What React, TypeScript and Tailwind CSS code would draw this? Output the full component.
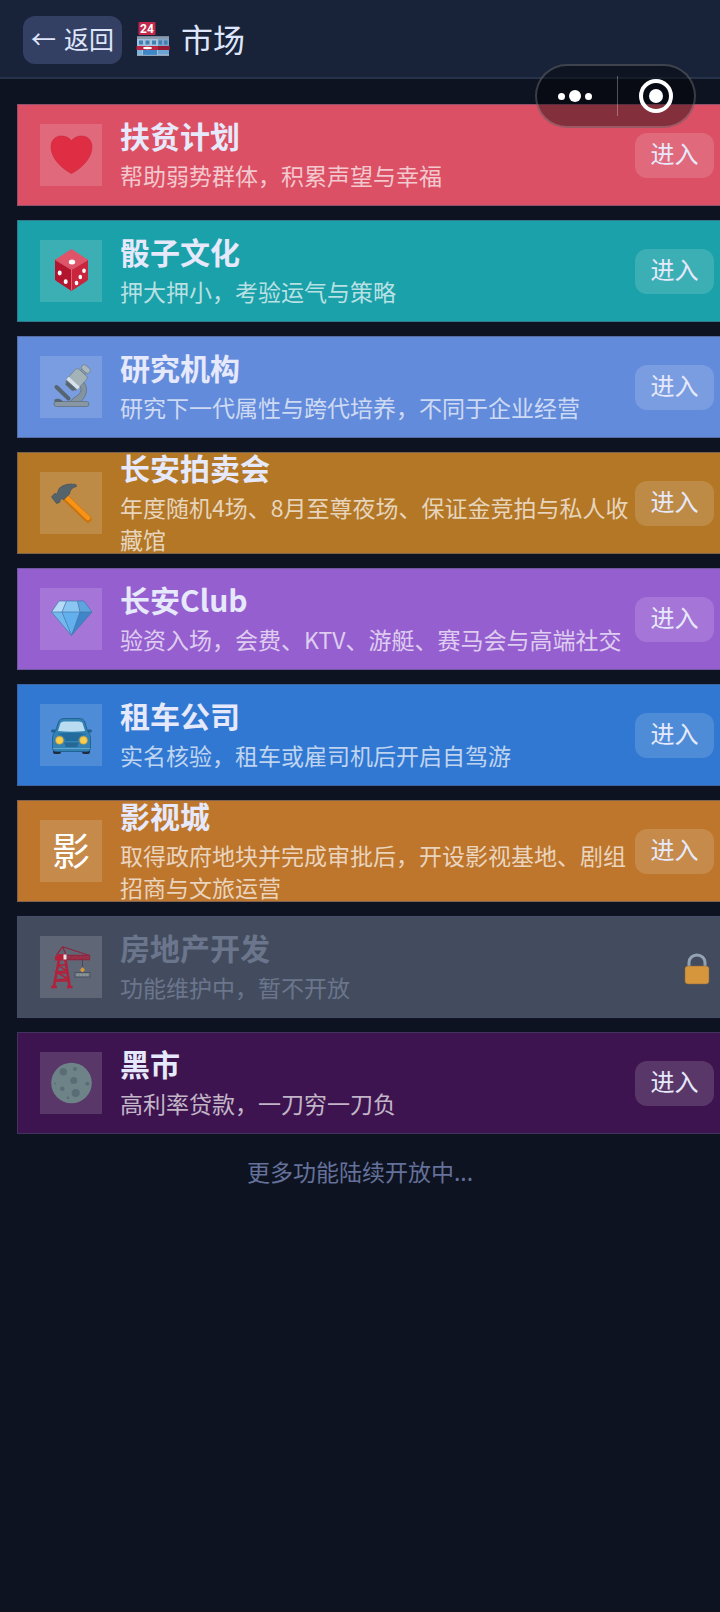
import React from 'react';

interface Venue {
  icon: React.ReactNode;
  name: string;
  desc: string;
  color: string;
  locked?: boolean;
}

const Glyph = ({ children }: { children: React.ReactNode }) => (
  <svg viewBox="0 0 62 62" className="w-full h-full" aria-hidden="true">
    {children}
  </svg>
);

const HeartIcon = () => (
  <Glyph>
    <path
      d="M31.5 49.5C27 47.5 11 37 11 23C11 16 15.5 12 21 12C25.5 12 29.5 13.5 31.5 17C33.5 13.5 37.5 12 42 12C47.5 12 52 16 52 23C52 37 36 47.5 31.5 49.5Z"
      fill="#df2d44"
      stroke="#c92a40"
      strokeWidth="0.6"
    />
  </Glyph>
);

const DiceIcon = () => (
  <Glyph>
    <g strokeLinejoin="round" strokeWidth="1">
      <path d="M31.5 9.5 47.5 20 31.5 29.5 15.5 20Z" fill="#df5468" stroke="#df5468" />
      <path d="M15.5 20 31.5 29.5V50.5L15.5 40Z" fill="#b3152f" stroke="#b3152f" />
      <path d="M47.5 20 31.5 29.5V50.5L47.5 40Z" fill="#c9263e" stroke="#c9263e" />
      <path d="M15.5 20 31.5 29.5 47.5 20M31.5 29.5V50.5" fill="none" stroke="#e57c8b" strokeWidth="0.7" />
    </g>
    <g fill="#fff">
      <ellipse cx="32" cy="22" rx="3.2" ry="2.5" />
      <ellipse cx="19.7" cy="33" rx="2" ry="2.4" />
      <ellipse cx="25.7" cy="41.7" rx="2" ry="2.4" />
      <ellipse cx="44" cy="30.7" rx="1.8" ry="2.3" />
      <ellipse cx="40.3" cy="37" rx="1.8" ry="2.3" />
      <ellipse cx="36.5" cy="43" rx="1.8" ry="2.3" />
    </g>
  </Glyph>
);

const MicroscopeIcon = () => (
  <Glyph>
    <path d="M41 24C48 28 49 39 40 46H30.5C32 42 36 41 38 39C42 36 42 31 38 29Z" fill="#83939f" stroke="#62717e" strokeWidth="0.8" />
    <rect x="14" y="45.5" width="35" height="5" rx="2.5" fill="#8797a3" stroke="#62717e" strokeWidth="0.8" />
    <path d="M14 44C17 42 21 42.5 23 46H15Z" fill="#566572" />
    <path d="M16.5 31 28.5 42.500" stroke="#566572" strokeWidth="4" strokeLinecap="round" />
    <g transform="rotate(42 36 24)" stroke="#6d7d88" strokeWidth="0.7">
      <rect x="33" y="8" width="6" height="9" fill="#8797a3" />
      <rect x="31" y="6.5" width="10" height="5.5" rx="2.700" fill="#a9b8bd" />
      <rect x="28.5" y="14" width="15" height="18" rx="2.5" fill="#a3b3b8" />
      <rect x="28.5" y="26.5" width="15" height="4" fill="#d7e2ea" stroke="none" />
      <path d="M29 30.5H43L40.5 34.5H31.5Z" fill="#566572" />
    </g>
  </Glyph>
);

const HammerIcon = () => (
  <Glyph>
    <path d="M25 25 48 47" stroke="#c8740e" strokeWidth="7" strokeLinecap="round" />
    <path d="M25.5 24.5 48 46" stroke="#f99315" strokeWidth="4.5" strokeLinecap="round" />
    <path
      d="M11.5 25 14.5 21.5 17 22 19 16.5Q25 10.5 36 12.5L36.5 14.5Q30 16 29.5 22L24 27.5 21 26.5 19.5 30.5 16.5 31.5Z"
      fill="#55636b"
      stroke="#47535b"
      strokeWidth="0.7"
    />
  </Glyph>
);

const DiamondIcon = () => (
  <Glyph>
    <path d="M19 13H26.5L22 24H11.5Z" fill="#b5dbf7" />
    <path d="M26.5 13H37.5L40 24H22Z" fill="#8ac6f1" />
    <path d="M37.5 13H44L52 24H40Z" fill="#5ea5df" />
    <path d="M11.5 24H22L31.5 47.5Z" fill="#72b9ed" />
    <path d="M22 24H40L31.5 47.5Z" fill="#62b1ee" />
    <path d="M40 24H52L31.5 47.5Z" fill="#3f86c9" />
    <path
      d="M19 13H44L52 24 31.5 47.5 11.5 24ZM11.5 24H52M26.5 13 22 24 31.5 47.5 40 24 37.5 13"
      fill="none"
      stroke="#4477aa"
      strokeWidth="0.7"
      strokeLinejoin="round"
    />
  </Glyph>
);

const CarIcon = () => (
  <Glyph>
    <rect x="13" y="43" width="8" height="7" rx="2" fill="#1e2c3d" />
    <rect x="42" y="43" width="8" height="7" rx="2" fill="#1e2c3d" />
    <rect x="11" y="25.5" width="5" height="3" rx="1.5" fill="#215f8d" />
    <rect x="47" y="25.5" width="5" height="3" rx="1.5" fill="#215f8d" />
    <path
      d="M19 17Q20 14.5 24 14.5H39Q43 14.5 44.5 17L47.5 27Q50.5 30 50.5 34V43Q50.5 47.5 47 47.5H16Q12.5 47.5 12.5 43V34Q12.5 30 15.5 27Z"
      fill="#3382b5"
      stroke="#1f5f8f"
      strokeWidth="0.9"
    />
    <path d="M20.5 19Q21.5 17.5 24 17.5H39Q41.5 17.5 42.5 19L45 27Q31.5 28.5 18 27Z" fill="#b9dcf1" />
    <path d="M16 30Q25 31 25.5 37H37.5Q38 31 47 30Q31.5 27.5 16 30Z" fill="#246b9d" />
    <path d="M24 38.5H39L37 43H26Z" fill="#256896" />
    <path d="M13 44.5H50" stroke="#65a4cd" strokeWidth="1.2" />
    <circle cx="19.5" cy="36.3" r="4" fill="#f6cd4f" stroke="#b08d3e" strokeWidth="0.6" />
    <circle cx="43.5" cy="36.3" r="4" fill="#f6cd4f" stroke="#b08d3e" strokeWidth="0.6" />
  </Glyph>
);

const CraneIcon = () => (
  <Glyph>
    <g fill="none" stroke="#8e2840" strokeWidth="1.3">
      <path d="M16.5 19 22.7 10.7 49.5 19.5M22.7 10.7 26 19" />
      <path d="M26 19.5H49.5V23.5H26M29 23.5 32 19.5 35 23.5 38 19.5 41 23.5 44 19.5 47 23.5" />
    </g>
    <path d="M26 20H49V23H26Z" fill="#a32a42" fillOpacity="0.7" />
    <path d="M15 20.5 19 18H26V24.5H15Z" fill="#b3203a" />
    <rect x="23.5" y="18.5" width="3" height="5" fill="#dfe5e8" />
    <g fill="none" stroke="#b3203a" strokeWidth="2.6">
      <path d="M19 24 14 50M25.5 24 29.5 50" />
      <path d="M18 29 26.5 35 16.5 36 28 43 15 44M17.5 29H26M16 37H27.5M14.5 45H29" strokeWidth="1.5" />
      <path d="M11 51H17M27 51H32.5" />
    </g>
    <path d="M42.5 24V32" stroke="#4b4453" strokeWidth="1" />
    <path d="M42.5 31 45 34 42.5 36.5 40 34Z" fill="#d99a3b" />
    <rect x="35" y="36.5" width="15" height="4.5" fill="#7a858b" stroke="#454f5e" strokeWidth="0.9" />
    <path d="M37 39H48" stroke="#9aa4a6" strokeDasharray="2 1" />
  </Glyph>
);

const MoonIcon = () => (
  <Glyph>
    <circle cx="31.5" cy="31" r="20.3" fill="#6d8388" />
    <g fill="#5a6d76">
      <circle cx="23.3" cy="19.7" r="3.7" />
      <circle cx="35" cy="17" r="2" />
      <circle cx="33.7" cy="28.5" r="3.5" />
      <circle cx="47.3" cy="31.7" r="2" />
      <circle cx="22.3" cy="36.7" r="2.2" />
      <circle cx="35.7" cy="41" r="4" />
      <circle cx="15" cy="31.5" r="1" />
      <circle cx="28" cy="45.7" r="1.3" />
    </g>
  </Glyph>
);

const LockIcon = () => (
  <svg viewBox="0 0 26 32" className="w-[26px] h-[32px] mr-1 mt-1 shrink-0" role="img" aria-label="未开放">
    <path d="M5 15V9.5A8 7.5 0 0 1 21 9.5V15" fill="none" stroke="#94a3b4" strokeWidth="3" />
    <rect x="1" y="13" width="24" height="18" rx="3" fill="#d6973c" stroke="#8a6640" strokeWidth="0.5" />
  </svg>
);

const StoreIcon = () => (
  <svg viewBox="0 0 34 36" className="w-[34px] h-[36px]" aria-hidden="true">
    <rect x="2.5" y="1" width="17" height="13" rx="1" fill="#c2294a" />
    <text x="11" y="12" textAnchor="middle" fontSize="12" fontWeight="700" fontFamily="Roboto, sans-serif" fill="#fff">
      24
    </text>
    <rect x="1" y="15.5" width="32" height="19" fill="#a3c3df" />
    <rect x="1" y="15.5" width="32" height="2.5" fill="#8a9aab" />
    <rect x="22" y="18" width="11" height="7" fill="#7ba5cb" />
    <g fill="#437fae">
      <rect x="3" y="19.5" width="4" height="4" />
      <rect x="9.5" y="19.5" width="4" height="4" />
      <rect x="16" y="19.5" width="4" height="4" />
      <rect x="22.5" y="19.5" width="3.5" height="4" />
      <rect x="28" y="19.5" width="3.5" height="4" />
    </g>
    <path d="M0.5 25H33.5V29H0.5Z" fill="#ba2440" />
    <path d="M22 25H33.5V29H22Z" fill="#951b34" />
    <ellipse cx="11.5" cy="27" rx="4.5" ry="1.2" fill="#fff" />
    <rect x="7" y="29" width="14" height="5.5" fill="#3d87c7" />
    <rect x="1" y="29" width="5" height="4.5" fill="#7db4dd" />
    <rect x="22" y="29" width="11" height="4.5" fill="#6ca5d3" />
    <path d="M1 34.3H33" stroke="#9fb0c0" />
  </svg>
);

const venues: Venue[] = [
  { icon: <HeartIcon />, name: '扶贫计划', desc: '帮助弱势群体，积累声望与幸福', color: 'bg-[#db5064]' },
  { icon: <DiceIcon />, name: '骰子文化', desc: '押大押小，考验运气与策略', color: 'bg-[#1ba1a9]' },
  { icon: <MicroscopeIcon />, name: '研究机构', desc: '研究下一代属性与跨代培养，不同于企业经营', color: 'bg-[#638bdb]' },
  { icon: <HammerIcon />, name: '长安拍卖会', desc: '年度随机4场、8月至尊夜场、保证金竞拍与私人收藏馆', color: 'bg-[#b37726]' },
  { icon: <DiamondIcon />, name: '长安Club', desc: '验资入场，会费、KTV、游艇、赛马会与高端社交', color: 'bg-[#965fd0]' },
  { icon: <CarIcon />, name: '租车公司', desc: '实名核验，租车或雇司机后开启自驾游', color: 'bg-[#3178d2]' },
  { icon: '影', name: '影视城', desc: '取得政府地块并完成审批后，开设影视基地、剧组招商与文旅运营', color: 'bg-[#bd762c]' },
  { icon: <CraneIcon />, name: '房地产开发', desc: '功能维护中，暂不开放', color: 'bg-[#434c5e]', locked: true },
  { icon: <MoonIcon />, name: '黑市', desc: '高利率贷款，一刀穷一刀负', color: 'bg-[#3d144f]' },
];

const VenueCard = ({ venue }: { venue: Venue }) => (
  <li className={`h-[102px] flex items-center pl-[22px] pr-[6px] border-l border-y border-[#475071]/50 ${venue.color}`}>
    <div className="w-[62px] h-[62px] shrink-0 bg-white/15 flex items-center justify-center text-[38px] leading-[56px] text-white">
      {typeof venue.icon === 'string' ? <span className="pb-1">{venue.icon}</span> : venue.icon}
    </div>
    <div className="flex-1 min-w-0 ml-[18px] pb-1">
      <h2 className={`text-[30px] leading-[40px] font-bold mb-1 ${venue.locked ? 'text-[#6b768d]' : 'text-[#e6e9fb]'}`}>
        {venue.name}
      </h2>
      <p className={`text-[23px] leading-[32px] ${venue.locked ? 'text-[#6b768d]' : 'text-white/70'}`}>{venue.desc}</p>
    </div>
    {venue.locked ? (
      <LockIcon />
    ) : (
      <button type="button" className="w-[79px] h-[45px] pb-1 shrink-0 rounded-xl bg-white/15 text-[24px] text-[#e6e9fb]">
        进入
      </button>
    )}
  </li>
);

// Floating host-app controls, sit on top of the page
const Capsule = () => (
  <div className="absolute top-[64px] right-[24px] w-[161px] h-[64px] rounded-full border-2 border-white/20 bg-black/40 flex items-center">
    <button type="button" aria-label="更多" className="flex-1 flex items-center justify-center gap-1 pr-1">
      <span className="w-[7px] h-[7px] rounded-full bg-white" />
      <span className="w-[12px] h-[12px] rounded-full bg-white" />
      <span className="w-[7px] h-[7px] rounded-full bg-white" />
    </button>
    <span className="w-px h-[40px] bg-white/30" />
    <button type="button" aria-label="关闭" className="flex-1 flex items-center justify-center">
      <span className="w-[34px] h-[34px] rounded-full border-4 border-white flex items-center justify-center">
        <span className="w-[14px] h-[14px] rounded-full bg-white" />
      </span>
    </button>
  </div>
);

export default function App() {
  return (
    <div className="relative min-h-screen bg-[#0e1321] font-['Noto_Sans_CJK_SC',sans-serif]">
      <header className="h-[79px] flex items-center pl-[23px] bg-[#182238] border-b-2 border-[#26324a]">
        <button
          type="button"
          className="w-[99px] h-[48px] mt-[2px] pb-[2px] rounded-xl bg-[#343f64] flex items-center justify-center gap-2 text-[25px] text-[#dfe6fb]"
        >
          <span>←</span>
          <span>返回</span>
        </button>
        <h1 className="ml-[14px] flex items-center gap-[11px] text-[32px] text-[#dfe6fb]">
          <StoreIcon />
          <span className="pb-[2px]">市场</span>
        </h1>
      </header>
      <ul className="pt-[25px] pl-[17px] flex flex-col gap-[14px]">
        {venues.map(v => (
          <VenueCard key={v.name} venue={v} />
        ))}
      </ul>
      <p className="mt-[21px] text-center text-[23px] leading-[32px] text-[#64719b]">更多功能陆续开放中...</p>
      <Capsule />
    </div>
  );
}
